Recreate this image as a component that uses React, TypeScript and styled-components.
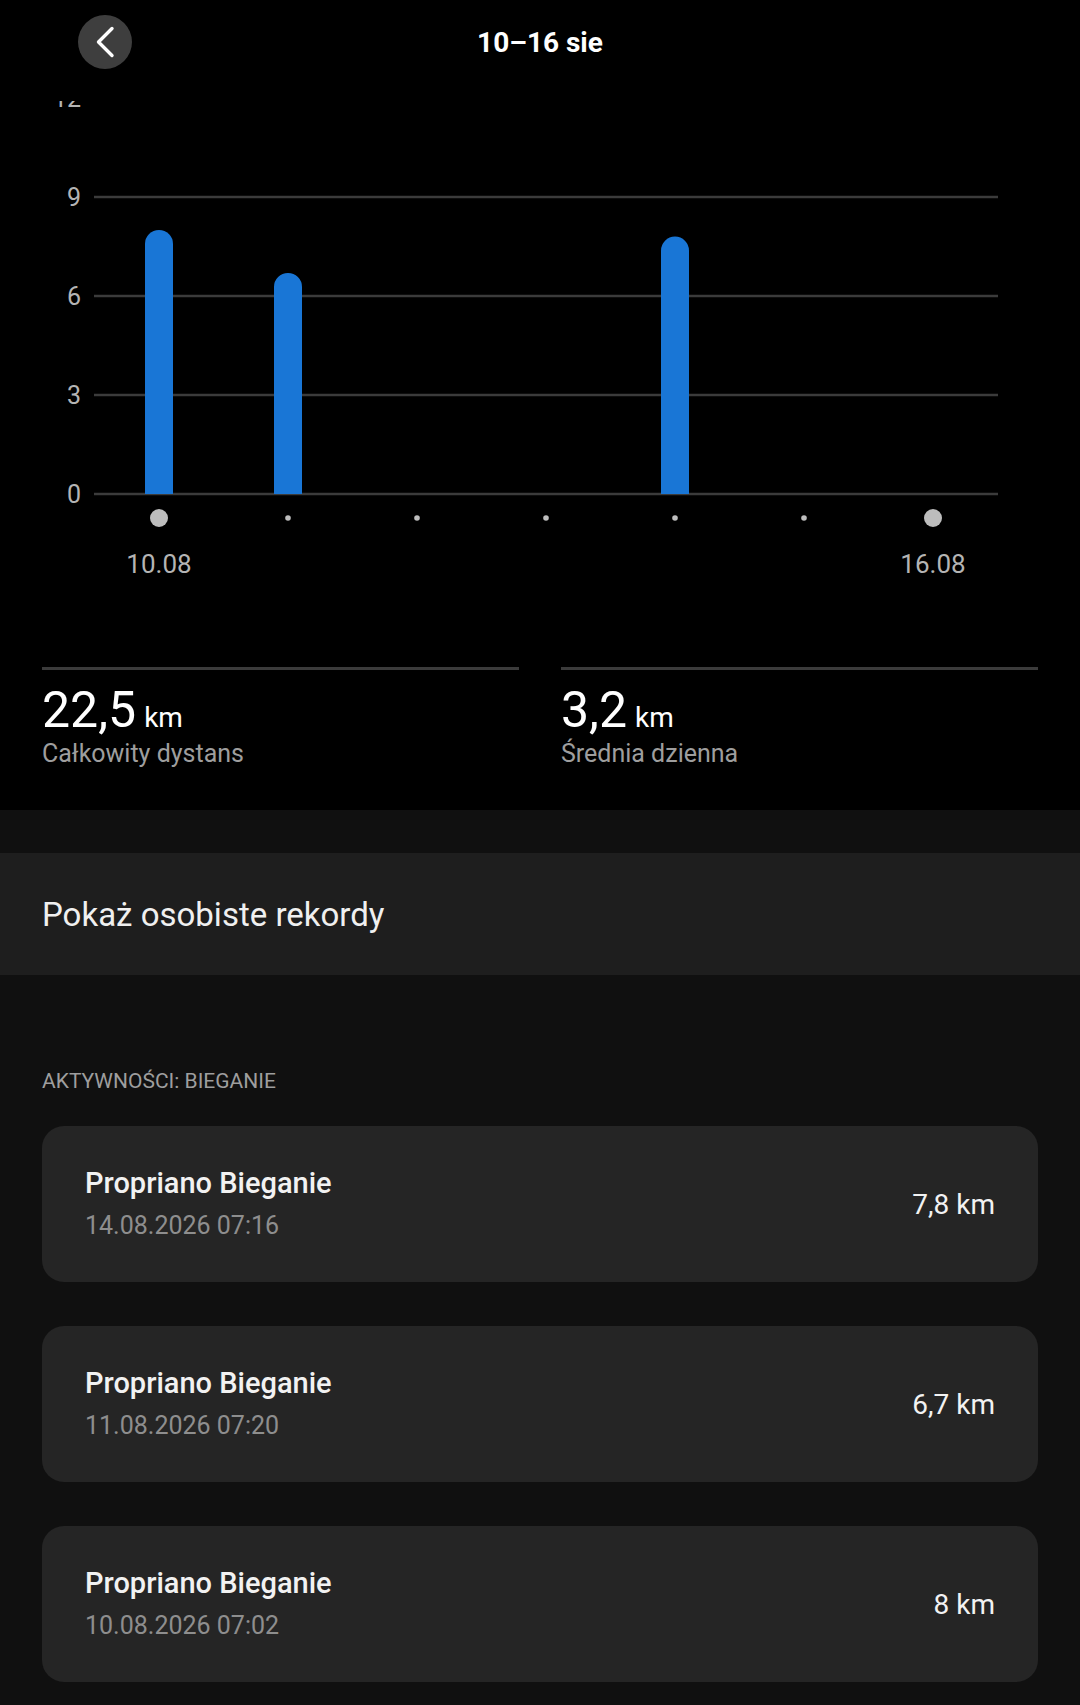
import React from 'react';
import styled, { createGlobalStyle } from 'styled-components';

const GlobalStyle = createGlobalStyle`
  html, body {
    margin: 0;
    padding: 0;
    background: #101010;
    font-family: Roboto, "Noto Sans", "Liberation Sans", sans-serif;
    -webkit-font-smoothing: antialiased;
  }
  * { box-sizing: border-box; }
`;

const days = [
    { value: 8, label: '10.08', big: true },
    { value: 6.7 },
    { value: 0 },
    { value: 0 },
    { value: 7.8 },
    { value: 0 },
    { value: 0, label: '16.08', big: true },
];

const activities = [
    { title: 'Propriano Bieganie', date: '14.08.2026 07:16', distance: '7,8 km' },
    { title: 'Propriano Bieganie', date: '11.08.2026 07:20', distance: '6,7 km' },
    { title: 'Propriano Bieganie', date: '10.08.2026 07:02', distance: '8 km' },
];

// chart geometry (svg coords)
const ZERO_Y = 393;
const UNIT = 33;
const FIRST_X = 159;
const STEP = 129;
const BAR_W = 28;

const barPath = (cx: number, value: number) => {
    const h = value * UNIT;
    const r = BAR_W / 2;
    const left = cx - r;
    const right = cx + r;
    const top = ZERO_Y - h;
    return `M${left} ${ZERO_Y} L${left} ${top + r} A${r} ${r} 0 0 1 ${right} ${top + r} L${right} ${ZERO_Y} Z`;
};

const WeekChart = () => (
    <ChartWrap>
        <svg width="1080" height="500" viewBox="0 0 1080 500">
            {[12, 9, 6, 3, 0].map((tick) => {
                const y = ZERO_Y - tick * UNIT;
                return (
                    <g key={tick}>
                        <line x1="94" x2="998" y1={y} y2={y} stroke="#3b3b3b" strokeWidth="2.5" />
                        <text x="81" y={y + 9} textAnchor="end" fontSize="25" fill="#b4b4b4"
                            fontFamily="Roboto, sans-serif">{tick}</text>
                    </g>
                );
            })}
            {days.map((d, i) => {
                const cx = FIRST_X + i * STEP;
                return (
                    <g key={i}>
                        {d.value > 0 && <path d={barPath(cx, d.value)} fill="#1976d6" />}
                        <circle cx={cx} cy="417" r={d.big ? 9 : 2.8} fill="#bdbdbd" />
                        {d.label && (
                            <text x={cx} y="472" textAnchor="middle" fontSize="26" fill="#b4b4b4"
                                fontFamily="Roboto, sans-serif">{d.label}</text>
                        )}
                    </g>
                );
            })}
        </svg>
    </ChartWrap>
);

const BackIcon = () => (
    <svg width="54" height="54" viewBox="0 0 54 54">
        <circle cx="27" cy="27" r="27" fill="#3e3e3e" />
        <path d="M34 13.5 L20.5 27 L34 40.5" fill="none" stroke="#ffffff" strokeWidth="3.4"
            strokeLinecap="round" strokeLinejoin="round" />
    </svg>
);

const App = () => (
    <>
        <GlobalStyle />
        <Page>
            <TopPanel>
                <Header>
                    <BackButton aria-label="Wstecz"><BackIcon /></BackButton>
                    <Title>10–16 sie</Title>
                    <span />
                </Header>
                <WeekChart />
                <Stats>
                    <StatBlock>
                        <StatValue>22,5<StatUnit>km</StatUnit></StatValue>
                        <StatCaption>Całkowity dystans</StatCaption>
                    </StatBlock>
                    <StatBlock>
                        <StatValue>3,2<StatUnit>km</StatUnit></StatValue>
                        <StatCaption>Średnia dzienna</StatCaption>
                    </StatBlock>
                </Stats>
            </TopPanel>

            <RecordsRow>Pokaż osobiste rekordy</RecordsRow>

            <ActivitySection>
                <SectionLabel>AKTYWNOŚCI: BIEGANIE</SectionLabel>
                <CardList>
                    {activities.map((a) => (
                        <ActivityCard key={a.date}>
                            <div>
                                <CardTitle>{a.title}</CardTitle>
                                <CardDate>{a.date}</CardDate>
                            </div>
                            <CardDistance>{a.distance}</CardDistance>
                        </ActivityCard>
                    ))}
                </CardList>
            </ActivitySection>
        </Page>
    </>
);

const Page = styled.div`
    width: 1080px;
    min-height: 1705px;
    background: #101010;
    color: #fff;
`;

const TopPanel = styled.section`
    background: #000;
    padding-bottom: 41px;
`;

const Header = styled.header`
    height: 101px;
    padding-top: 15px;
    display: grid;
    grid-template-columns: 1fr auto 1fr;
    align-items: start;
`;

const BackButton = styled.button`
    margin-left: 78px;
    width: 54px;
    height: 54px;
    padding: 0;
    border: none;
    background: none;
    display: block;
`;

const Title = styled.h1`
    margin: 0;
    height: 54px;
    display: flex;
    align-items: center;
    font-size: 28px;
    font-weight: 700;
    color: #fff;
`;

const ChartWrap = styled.div`
    height: 500px;
    overflow: hidden;
    svg { display: block; }
`;

const Stats = styled.div`
    display: grid;
    grid-template-columns: 1fr 1fr;
    column-gap: 42px;
    padding: 66px 42px 0;
`;

const StatBlock = styled.div`
    border-top: 3px solid #3b3b3b;
    padding-top: 15px;
`;

const StatValue = styled.div`
    font-size: 50px;
    line-height: 1;
    color: #fff;
`;

const StatUnit = styled.span`
    font-size: 28px;
    margin-left: 8px;
`;

const StatCaption = styled.div`
    margin-top: 4px;
    font-size: 25px;
    line-height: 1.2;
    color: #9e9e9e;
`;

const RecordsRow = styled.div`
    margin-top: 43px;
    height: 122px;
    background: #1e1e1e;
    padding: 0 42px;
    display: flex;
    align-items: center;
    font-size: 33px;
    color: #f0f0f0;
`;

const ActivitySection = styled.section`
    padding: 94px 42px 22px;
`;

const SectionLabel = styled.div`
    font-size: 21px;
    line-height: 24px;
    color: #9e9e9e;
`;

const CardList = styled.div`
    margin-top: 33px;
    display: flex;
    flex-direction: column;
    gap: 44px;
`;

const ActivityCard = styled.div`
    height: 156px;
    border-radius: 22px;
    background: #252525;
    padding: 0 43px;
    display: flex;
    align-items: center;
    justify-content: space-between;
`;

const CardTitle = styled.div`
    font-size: 29px;
    font-weight: 500;
    line-height: 35px;
    color: #f2f2f2;
`;

const CardDate = styled.div`
    margin-top: 9px;
    font-size: 25px;
    line-height: 32px;
    color: #8e8e8e;
`;

const CardDistance = styled.div`
    font-size: 28px;
    color: #f2f2f2;
`;

export default App;
